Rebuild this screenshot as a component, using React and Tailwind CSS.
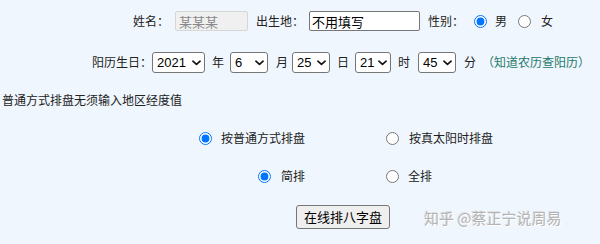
import React from "react";

const years = ["2021"];
const months = ["6"];
const days = ["25"];
const hours = ["21"];
const minutes = ["45"];

const Select = ({ value, options, w }) => (
    <span className={`relative inline-flex ${w} h-[21px]`}>
        <select
            defaultValue={value}
            className="appearance-none w-full h-full border border-[#767676] rounded-[3px] bg-white text-[13px] leading-none text-black pl-[4px] font-['Liberation_Sans',sans-serif]"
        >
            {options.map((o) => (
                <option key={o}>{o}</option>
            ))}
        </select>
        <svg
            viewBox="0 0 10 6"
            className="absolute right-[4px] top-[8px] w-[9px] h-[6px] pointer-events-none"
        >
            <path d="M1 1l4 3.6L9 1" fill="none" stroke="#111" strokeWidth="1.8" strokeLinecap="round" strokeLinejoin="round" />
        </svg>
    </span>
);

const Radio = ({ name, checked, className }) => (
    <input
        type="radio"
        name={name}
        defaultChecked={checked}
        className={`w-[13px] h-[13px] accent-[#0075ff] ${className}`}
    />
);

const App = () => {
    return (
        <div className="relative w-[600px] h-[244px] overflow-hidden bg-[#f0f6fd] text-[12px] text-[#222] font-['Noto_Sans_CJK_SC',sans-serif]">
            {/* name / birthplace / sex */}
            <div className="h-[42px] flex items-center pl-[133px]">
                <span>姓名：</span>
                <input
                    disabled
                    defaultValue="某某某"
                    className="ml-[6px] w-[73px] h-[20px] px-[3px] border border-[#d6d6d6] rounded-[2px] bg-[#f0f0f0] text-[13px] text-[#888]"
                />
                <span className="ml-[8px]">出生地：</span>
                <input
                    defaultValue="不用填写"
                    className="ml-[5px] w-[111px] h-[20px] px-[2px] border border-[#767676] rounded-[2px] bg-white text-[13px] text-black"
                />
                <span className="ml-[8px]">性别：</span>
                <Radio name="sex" checked className="ml-[10px]" />
                <span className="ml-[8px]">男</span>
                <Radio name="sex" className="ml-[11px]" />
                <span className="ml-[10px]">女</span>
            </div>

            {/* solar birthday */}
            <div className="h-[40px] flex items-center pl-[92px]">
                <span>阳历生日：</span>
                <Select value="2021" options={years} w="w-[53px]" />
                <span className="ml-[7px]">年</span>
                <span className="ml-[6px] flex"><Select value="6" options={months} w="w-[38px]" /></span>
                <span className="ml-[8px]">月</span>
                <span className="ml-[4px] flex"><Select value="25" options={days} w="w-[38px]" /></span>
                <span className="ml-[7px]">日</span>
                <span className="ml-[6px] flex"><Select value="21" options={hours} w="w-[36px]" /></span>
                <span className="ml-[7px]">时</span>
                <span className="ml-[8px] flex"><Select value="45" options={minutes} w="w-[38px]" /></span>
                <span className="ml-[8px]">分</span>
                <span className="ml-[6px] text-[#22796a]">（知道农历查阳历）</span>
            </div>

            <div className="h-[36px] flex items-center pl-[2px]">
                普通方式排盘无须输入地区经度值
            </div>

            {/* chart mode */}
            <div className="h-[40px] flex items-center">
                <Radio name="mode" checked className="ml-[199px]" />
                <span className="ml-[9px]">按普通方式排盘</span>
                <Radio name="mode" className="ml-[81px]" />
                <span className="ml-[10px]">按真太阳时排盘</span>
            </div>

            <div className="h-[36px] flex items-center">
                <Radio name="detail" checked className="ml-[258px]" />
                <span className="ml-[10px]">简排</span>
                <Radio name="detail" className="ml-[81px]" />
                <span className="ml-[9px]">全排</span>
            </div>

            <div className="h-[46px] flex items-center">
                <button className="ml-[296px] w-[94px] h-[24px] border border-[#767676] rounded-[3px] bg-[#efefef] text-[13px] text-black">
                    在线排八字盘
                </button>
            </div>

            {/* watermark */}
            <div className="absolute left-[424px] top-[207px] text-[15px] text-[#b4b4b4] [text-shadow:1px_1px_0_#fff,-1px_-1px_0_#8a8a8a33] whitespace-nowrap">
                知乎 @蔡正宁说周易
            </div>
        </div>
    );
};

export default App;
